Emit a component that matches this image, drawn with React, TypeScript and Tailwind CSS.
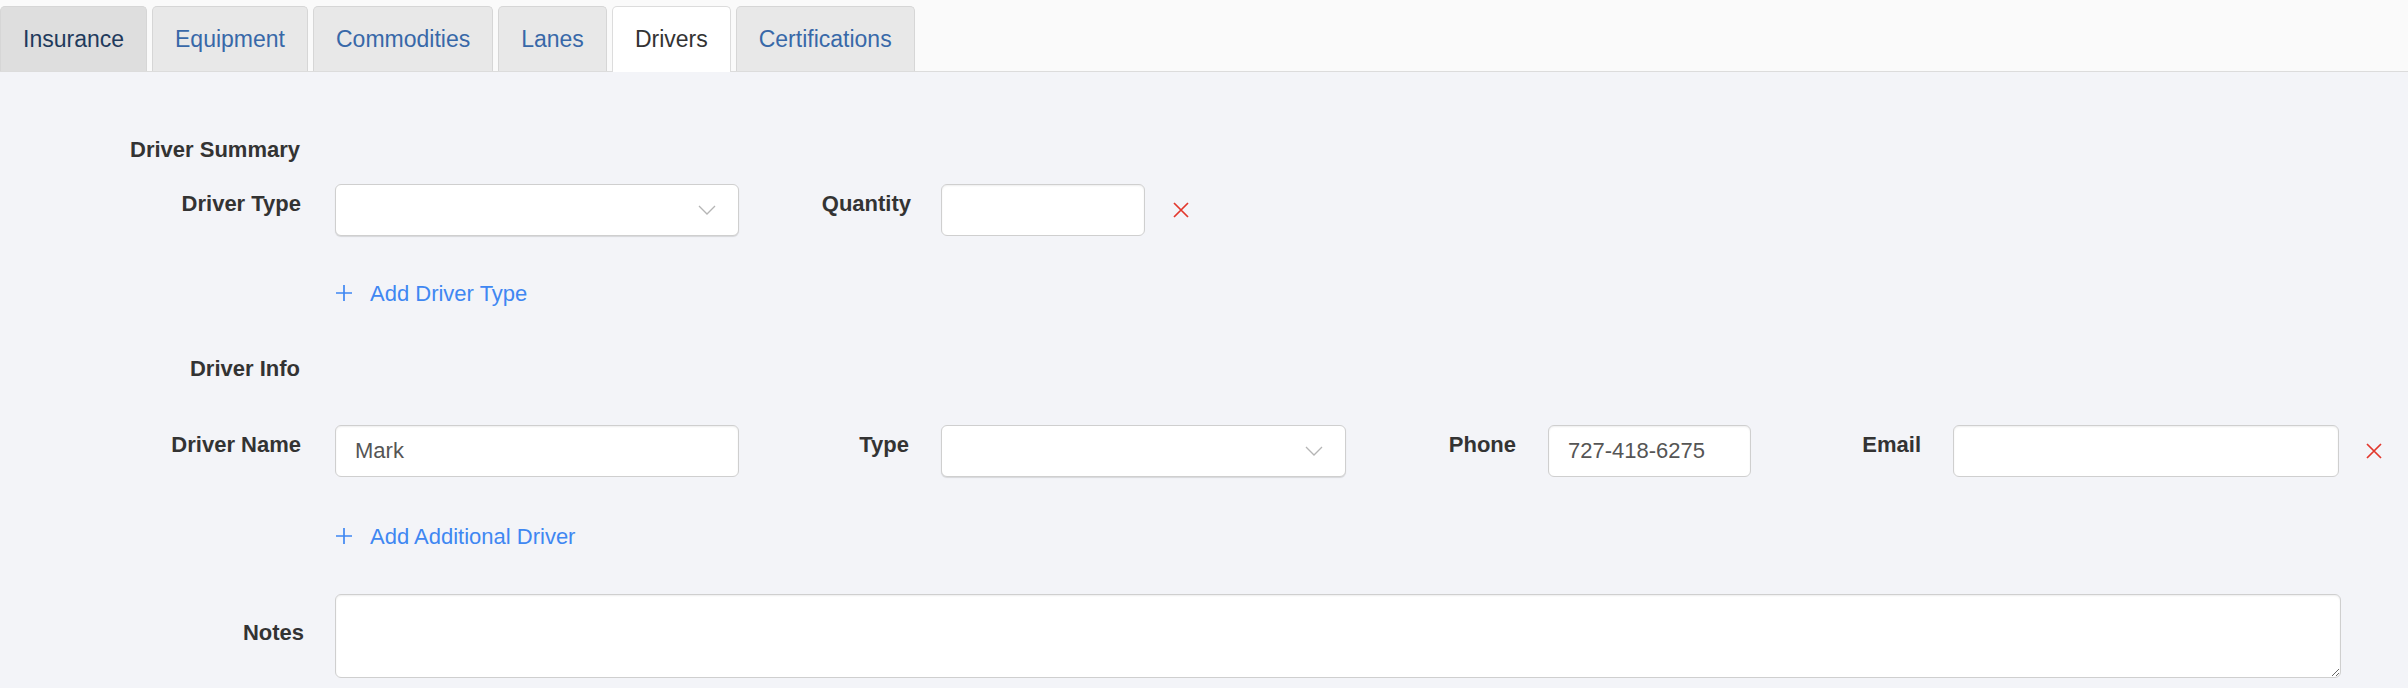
import React from 'react';

const tabs = [
  { name: 'Insurance', state: 'dim' },
  { name: 'Equipment', state: 'idle' },
  { name: 'Commodities', state: 'idle' },
  { name: 'Lanes', state: 'idle' },
  { name: 'Drivers', state: 'active' },
  { name: 'Certifications', state: 'idle' },
];

function Chevron() {
  return (
    <svg width="18" height="10" viewBox="0 0 18 10" fill="none">
      <path d="M1 1l8 8 8-8" stroke="#b5b5b5" strokeWidth="1.3" />
    </svg>
  );
}

function RemoveX() {
  return (
    <svg width="18" height="18" viewBox="0 0 18 18" fill="none">
      <path d="M2 2l14 14M16 2L2 16" stroke="#e2372c" strokeWidth="1.7" />
    </svg>
  );
}

function Plus() {
  return (
    <svg width="18" height="18" viewBox="0 0 18 18" fill="none">
      <path d="M9 1v16M1 9h16" stroke="#3f87f2" strokeWidth="1.7" />
    </svg>
  );
}

function Label({ text, pr = 'pr-[34px]' }: { text: string; pr?: string }) {
  return (
    <div className={`w-[202px] shrink-0 flex justify-end whitespace-nowrap font-bold text-[#333] leading-[30px] pt-[5px] ${pr}`}>
      {text}
    </div>
  );
}

function SectionTitle({ text }: { text: string }) {
  return (
    <div className="w-[202px] pr-[35px] flex justify-end whitespace-nowrap font-bold text-[#333] leading-[30px]">
      {text}
    </div>
  );
}

function TextBox({ width, value }: { width: string; value?: string }) {
  return (
    <input
      readOnly
      defaultValue={value}
      className={`${width} h-[52px] shrink-0 rounded-[6px] border border-[#cfcfcf] bg-white px-[19px] text-[22px] text-[#555] shadow-[inset_0_1px_2px_rgba(0,0,0,0.07)] outline-none`}
    />
  );
}

function SelectBox({ width }: { width: string }) {
  return (
    <div
      className={`${width} h-[52px] shrink-0 rounded-[6px] border border-[#cfcfcf] bg-white shadow-[0_1px_1px_rgba(0,0,0,0.12)] flex items-center justify-end pr-[22px]`}
    >
      <Chevron />
    </div>
  );
}

function AddLink({ text }: { text: string }) {
  return (
    <div className="flex items-center gap-[17px] pl-[202px] h-[30px] text-[#3f87f2]">
      <Plus />
      <span>{text}</span>
    </div>
  );
}

export default function App() {
  return (
    <div className="w-[2408px] h-[688px] overflow-hidden bg-[#f3f4f8] text-[22px] font-['Liberation_Sans',Arial,sans-serif]">
      {/* Tabs */}
      <div className="flex gap-[5px] pt-[6px] bg-[#fafafa] border-b border-[#dcdcdc]">
        {tabs.map((t) => (
          <div
            key={t.name}
            className={`h-[65px] px-[22px] flex items-center rounded-t-[5px] border border-b-0 -mb-px text-[23px] ${
              t.state === 'active'
                ? 'bg-white border-[#dcdcdc] text-[#333] h-[66px]'
                : t.state === 'dim'
                ? 'bg-[#dedede] border-[#d6d6d6] text-[#1f3a5c]'
                : 'bg-[#e8e8e8] border-[#d6d6d6] text-[#3868a8]'
            }`}
          >
            {t.name}
          </div>
        ))}
      </div>

      <div className="pl-[133px] flex flex-col">
        <div className="mt-[63px]">
          <SectionTitle text="Driver Summary" />
        </div>

        <div className="mt-[19px] flex items-start">
          <Label text="Driver Type" />
          <SelectBox width="w-[404px]" />
          <Label text="Quantity" pr="pr-[30px]" />
          <TextBox width="w-[204px]" />
          <div className="ml-[27px] h-[52px] flex items-center">
            <RemoveX />
          </div>
        </div>

        <div className="mt-[42px]">
          <AddLink text="Add Driver Type" />
        </div>

        <div className="mt-[46px]">
          <SectionTitle text="Driver Info" />
        </div>

        <div className="mt-[41px] flex items-start">
          <Label text="Driver Name" />
          <TextBox width="w-[404px]" value="Mark" />
          <Label text="Type" pr="pr-[32px]" />
          <SelectBox width="w-[405px]" />
          <Label text="Phone" pr="pr-[32px]" />
          <TextBox width="w-[203px]" value="727-418-6275" />
          <Label text="Email" pr="pr-[32px]" />
          <TextBox width="w-[386px]" />
          <div className="ml-[26px] h-[52px] flex items-center">
            <RemoveX />
          </div>
        </div>

        <div className="mt-[44px]">
          <AddLink text="Add Additional Driver" />
        </div>

        {/* Notes */}
        <div className="mt-[43px] flex items-start">
          <div className="w-[202px] shrink-0 text-right font-bold text-[#333] leading-[30px] pt-[24px] pr-[31px]">
            Notes
          </div>
          <textarea
            readOnly
            className="w-[2006px] h-[84px] rounded-[6px] border border-[#cfcfcf] bg-white shadow-[inset_0_1px_2px_rgba(0,0,0,0.07)] outline-none"
          />
        </div>
      </div>
    </div>
  );
}
